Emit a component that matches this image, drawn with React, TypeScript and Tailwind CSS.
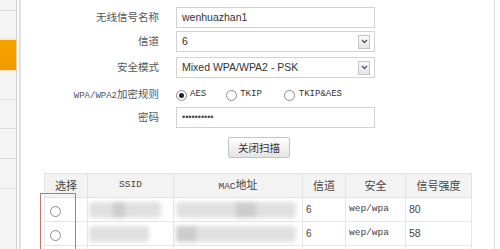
import React from "react";

const cjk = { fontFamily: '"Noto Sans CJK SC", "Noto Sans", sans-serif' };
const arial = { fontFamily: '"Liberation Sans", Arial, sans-serif' };
const mono = { fontFamily: '"Liberation Mono", "Noto Sans CJK SC", monospace' };

function Radio({ checked }: { checked?: boolean }) {
  return (
    <span className="w-[11px] h-[11px] rounded-full border border-[#8a8a8a] bg-white flex items-center justify-center shrink-0">
      {checked && <span className="w-[5px] h-[5px] rounded-full bg-[#222]" />}
    </span>
  );
}

function Arrow() {
  return (
    <span className="w-[12px] h-[14px] border border-[#c4c4c4] bg-gradient-to-b from-[#fafafa] to-[#e6e6e6] flex items-center justify-center">
      <svg width="7" height="5" viewBox="0 0 7 5">
        <path d="M1 1 L3.5 3.5 L6 1" stroke="#4a5a6a" strokeWidth="1.4" fill="none" />
      </svg>
    </span>
  );
}

function Label({ children }: { children: React.ReactNode }) {
  return (
    <div className="w-[138px] text-right text-[10.5px] text-[#555] leading-none" style={cjk}>
      {children}
    </div>
  );
}

function Blob({ w, dark }: { w: number; dark?: [number, number] }) {
  return (
    <div className="relative h-[16px] blur-[2px]" style={{ width: w }}>
      <div className="absolute inset-0 bg-[#e0e0e0] rounded-sm" />
      {dark && (
        <div className="absolute top-0 bottom-0 bg-[#cdcdcd]" style={{ left: dark[0], width: dark[1] }} />
      )}
    </div>
  );
}

export default function App() {
  return (
    <div className="w-[500px] h-[249px] flex bg-white overflow-hidden">
      <aside className="w-[17px] bg-[#f5f5f5] border-r border-[#d4d4d4] flex flex-col shrink-0">
        <div className="h-[11px] shrink-0 border-b border-[#dcdcdc]" />
        <div className="h-[29px] shrink-0" />
        <div className="h-[30px] shrink-0 bg-gradient-to-b from-[#f6a300] to-[#f29a00] shadow-[0_0_3px_#ffd27a]" />
        <div className="h-[30px] shrink-0 border-b border-[#dcdcdc]" />
        <div className="h-[29px] shrink-0 border-b border-[#dcdcdc]" />
        <div className="h-[30px] shrink-0 border-b border-[#dcdcdc]" />
        <div className="h-[30px] shrink-0 border-b border-[#dcdcdc]" />
      </aside>
      <div className="w-[2px] bg-[#f8f8f8] shrink-0" />
      <div className="w-[2px] bg-[#e0e0e0] shrink-0" />
      <main className="w-[473px] relative shrink-0 flex flex-col pt-[7px]">
        <div className="flex items-center h-[21px] shrink-0">
          <Label>无线信号名称</Label>
          <div className="ml-[17px] w-[199px] h-[21px] border border-[#d2d2d2] flex items-center px-[5px] text-[10.5px] text-[#333]" style={arial}>
            wenhuazhan1
          </div>
        </div>
        <div className="flex items-center h-[21px] mt-[3px] shrink-0">
          <Label>信道</Label>
          <div className="ml-[17px] w-[199px] h-[21px] border border-[#d2d2d2] flex items-center justify-between pl-[5px] pr-[4px] text-[10.5px] text-[#333]" style={arial}>
            <span>6</span>
            <Arrow />
          </div>
        </div>
        <div className="flex items-center h-[21px] mt-[5px] shrink-0">
          <Label>安全模式</Label>
          <div className="ml-[17px] w-[199px] h-[21px] border border-[#d2d2d2] flex items-center justify-between pl-[5px] pr-[4px] text-[10.5px] text-[#333]" style={arial}>
            <span>Mixed WPA/WPA2 - PSK</span>
            <Arrow />
          </div>
        </div>
        <div className="flex items-center h-[24px] mt-[5px] shrink-0">
          <Label>
            <span className="text-[9px]" style={mono}>WPA/WPA2</span>加密规则
          </Label>
          <div className="ml-[17px] flex items-center text-[9px] text-[#333]" style={mono}>
            <Radio checked />
            <span className="ml-[3px]">AES</span>
            <span className="ml-[20px]"><Radio /></span>
            <span className="ml-[3px]">TKIP</span>
            <span className="ml-[22px]"><Radio /></span>
            <span className="ml-[4px]">TKIP&amp;AES</span>
          </div>
        </div>
        <div className="flex items-center h-[21px] shrink-0">
          <Label>密码</Label>
          <div className="ml-[17px] w-[199px] h-[21px] border border-[#d2d2d2] flex items-center px-[5px] text-[9px] text-[#444]" style={arial}>
            ••••••••••
          </div>
        </div>
        <div className="ml-[207px] mt-[9px] shrink-0 w-[62px] h-[21px] border border-[#c4c4c4] rounded-[2px] bg-gradient-to-b from-white to-[#e4e4e4] flex items-center justify-center text-[10.5px] text-[#333]" style={cjk}>
          关闭扫描
        </div>
        <table className="ml-[23px] mt-[15px] shrink-0 border-collapse w-[427px] table-fixed text-[#444]">
          <colgroup>
            <col className="w-[43px]" />
            <col className="w-[86px]" />
            <col className="w-[129px]" />
            <col className="w-[43px]" />
            <col className="w-[60px]" />
            <col className="w-[66px]" />
          </colgroup>
          <thead>
            <tr className="h-[24px] bg-[#f3f3f3]">
              <th className="border border-[#e2e2e2] font-normal text-[11px]" style={cjk}>选择</th>
              <th className="border border-[#e2e2e2] font-normal text-[9.5px]" style={mono}>SSID</th>
              <th className="border border-[#e2e2e2] font-normal text-[9.5px]" style={mono}>MAC<span className="text-[11px]" style={cjk}>地址</span></th>
              <th className="border border-[#e2e2e2] font-normal text-[11px]" style={cjk}>信道</th>
              <th className="border border-[#e2e2e2] font-normal text-[11px]" style={cjk}>安全</th>
              <th className="border border-[#e2e2e2] font-normal text-[11px]" style={cjk}>信号强度</th>
            </tr>
          </thead>
          <tbody>
            <tr className="h-[24px]">
              <td className="border border-[#e6e6e6] pl-[5px] pt-[3px]"><Radio /></td>
              <td className="border border-[#e6e6e6] pl-[1px]"><Blob w={72} dark={[24, 12]} /></td>
              <td className="border border-[#e6e6e6] pl-[2px]"><Blob w={120} dark={[60, 20]} /></td>
              <td className="border border-[#e6e6e6] pl-[3px] text-[10px]" style={arial}>6</td>
              <td className="border border-[#e6e6e6] pl-[3px] text-[9.5px]" style={mono}>wep/wpa</td>
              <td className="border border-[#e6e6e6] pl-[3px] text-[10.5px]" style={arial}>80</td>
            </tr>
            <tr className="h-[24px]">
              <td className="border border-[#e6e6e6] pl-[5px] pt-[3px]"><Radio /></td>
              <td className="border border-[#e6e6e6] pl-[1px]"><Blob w={60} /></td>
              <td className="border border-[#e6e6e6] pl-[2px]"><Blob w={120} dark={[0, 20]} /></td>
              <td className="border border-[#e6e6e6] pl-[3px] text-[10px]" style={arial}>6</td>
              <td className="border border-[#e6e6e6] pl-[3px] text-[9.5px]" style={mono}>wep/wpa</td>
              <td className="border border-[#e6e6e6] pl-[3px] text-[10.5px]" style={arial}>58</td>
            </tr>
            <tr className="h-[24px]">
              <td className="border border-[#e6e6e6]" />
              <td className="border border-[#e6e6e6]" />
              <td className="border border-[#e6e6e6]" />
              <td className="border border-[#e6e6e6]" />
              <td className="border border-[#e6e6e6]" />
              <td className="border border-[#e6e6e6]" />
            </tr>
          </tbody>
        </table>
        <div className="absolute left-[19px] top-[193px] w-[36px] h-[70px] border border-[#c47272] pointer-events-none" />
      </main>
      <div className="w-[1px] bg-[#d8d8d8] shrink-0" />
      <div className="flex-1" />
    </div>
  );
}
